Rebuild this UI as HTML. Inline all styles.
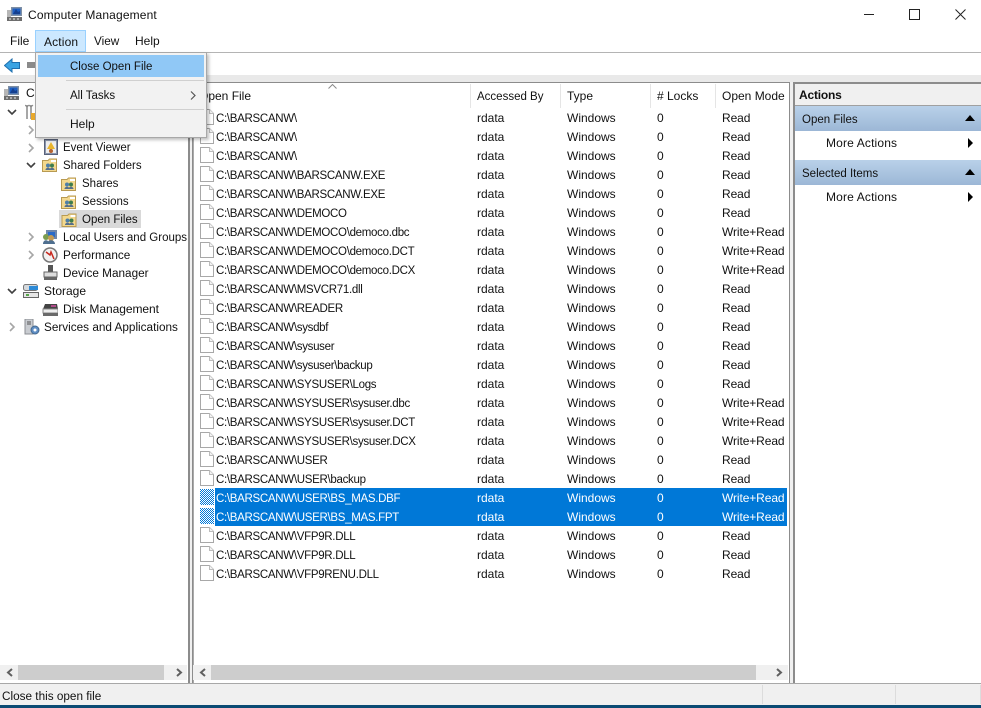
<!DOCTYPE html>
<html><head><meta charset="utf-8"><title>Computer Management</title>
<style>
html,body{margin:0;padding:0;background:#fff}
#w{position:relative;width:981px;height:708px;overflow:hidden;background:#fff;font:12px "Liberation Sans",sans-serif;color:#111}
.a{position:absolute;white-space:nowrap}
.t{position:absolute;white-space:nowrap;line-height:18px;height:18px}
.n{font-size:11.5px;margin-top:1px}
.m{font-size:11.75px;margin-top:1px}
.r{position:relative;height:19px;line-height:19px;white-space:nowrap}
.r span{position:absolute;top:1px}
.r span:nth-of-type(1){left:24px;top:2px;font-size:11.5px;letter-spacing:-.3px}
.r span:nth-of-type(2){left:285px}
.r span:nth-of-type(3){left:375px}
.r span:nth-of-type(4){left:465px}
.r span:nth-of-type(5){left:530px;letter-spacing:-.1px}
.r svg{position:absolute;left:8px;top:1px}
.s{color:#fff}
.s:before{content:"";position:absolute;left:23px;top:0;width:572px;height:19px;background:#0078d7}
.s span{z-index:1}
.h{position:absolute;top:0;height:25px;line-height:27px}
.sep{position:absolute;top:84px;height:24px;width:1px;background:#e5e5e5}
.bar{position:absolute;left:795px;width:186px;height:25px;background:linear-gradient(#b9d1e9,#9cb7d6);line-height:25px;font-size:11.5px}
.bar span{top:2px}
svg{display:block}
</style></head><body><div id="w">
<svg width="0" height="0" style="position:absolute"><defs>
<symbol id="doc" viewBox="0 0 14 16"><path d="M.5.5H9.5L13.5 4.500V15.500H.5Z" fill="#fff" stroke="#a8a8a8"/><path d="M9.500.5V4.500H13.500" fill="#f3f3f3" stroke="#bcbcbc"/></symbol>
<symbol id="sel" viewBox="0 0 14 16"><pattern id="ck" width="2" height="2" patternUnits="userSpaceOnUse"><rect width="2" height="2" fill="#fff"/><rect width="1" height="1" fill="#0078d7"/><rect x="1" y="1" width="1" height="1" fill="#0078d7"/></pattern><rect width="14" height="16" fill="url(#ck)"/></symbol>
<symbol id="pc" viewBox="0 0 16 16"><rect x="4" y="1" width="11" height="9" fill="#7e8fa5"/><rect x="5.500" y="2.500" width="8" height="6" fill="#1d5fc4"/><path d="M6 8L9 3l2 3 2-1v3Z" fill="#153f8f"/><rect x="0" y="4" width="4" height="8" fill="#b6b6b6"/><rect x="0" y="11" width="15" height="4" fill="#6d6d6d"/><path d="M2 13h2M6 13h2M10 13h2" stroke="#eee"/></symbol>
<symbol id="fold" viewBox="0 0 15 15"><path d="M.5 3.500H6L7.500 2H14.500V14.500H.5Z" fill="#f3d88e" stroke="#b89a52"/><rect x="9" y="3" width="5" height="2" fill="#fff"/><circle cx="6" cy="8.500" r="2" fill="#4f7fa8"/><circle cx="10" cy="8.500" r="2" fill="#3e7d4d"/><path d="M3.500 13c0-3 5-3 5 0ZM7.500 13c0-3 5-3 5 0Z" fill="#556f8c"/></symbol>
<symbol id="ch" viewBox="0 0 10 10"><path d="M1 3l4 4 4-4" fill="none" stroke="#404040" stroke-width="1.600"/></symbol>
<symbol id="rt" viewBox="0 0 10 10"><path d="M3 1l4 4-4 4" fill="none" stroke="#a6a6a6" stroke-width="1.600"/></symbol>
</defs></svg>

<!-- title bar -->
<svg class="a" style="left:7px;top:6px" width="16" height="16"><use href="#pc"/></svg>
<div class="a" style="left:28px;top:6px;line-height:18px;letter-spacing:.15px">Computer Management</div>
<div class="a" style="left:864px;top:14px;width:10px;height:1px;background:#222"></div>
<div class="a" style="left:909px;top:9px;width:9px;height:9px;border:1px solid #222"></div>
<svg class="a" style="left:955px;top:9px" width="11" height="11"><path d="M.5.5l10 10M10.500.5l-10 10" stroke="#222"/></svg>

<!-- menu bar -->
<div class="t" style="left:10px;top:32px">File</div>
<div class="a" style="left:35px;top:30px;width:49px;height:20px;background:#cce8ff;border:1px solid #99d1ff"></div>
<div class="t" style="left:44px;top:33px;letter-spacing:.15px">Action</div>
<div class="t m" style="left:94px;top:32px">View</div>
<div class="t" style="left:135px;top:32px">Help</div>
<div class="a" style="left:0;top:52px;width:981px;height:1px;background:#b4b4b4"></div>

<!-- toolbar -->
<svg class="a" style="left:4px;top:58px" width="16" height="15"><path d="M.500 7.500L8 1v3.500h7.500v6H8V14Z" fill="#3aa3e3" stroke="#1f6fae"/></svg>
<div class="a" style="left:27px;top:62px;width:8px;height:6px;background:#8a8a8a"></div>
<div class="a" style="left:0;top:75px;width:981px;height:7px;background:#e9e9e9"></div>

<!-- panes frame -->
<div class="a" style="left:0;top:82px;width:981px;height:602px;background:#f0f0f0"></div>
<div class="a" style="left:-2px;top:82px;width:189px;height:600px;background:#fff;border:1px solid #8c8c8c;border-width:1px 2px 2px 1px"></div>
<div class="a" style="left:192px;top:82px;width:596px;height:600px;background:#fff;border:1px solid #8c8c8c;border-width:1px 1px 2px 1px;box-shadow:inset 1px 0 0 #aaa"></div>
<div class="a" style="left:793px;top:82px;width:188px;height:600px;background:#fff;border-left:2px solid #8c8c8c;border-top:2px solid #8c8c8c;border-bottom:2px solid #dcdcdc"></div>

<!-- tree -->
<svg class="a" style="left:4px;top:85px" width="16" height="16"><use href="#pc"/></svg>
<div class="t" style="left:26px;top:84px">Com</div>
<svg class="a" style="left:7px;top:107px" width="10" height="10"><use href="#ch"/></svg>
<svg class="a" style="left:25px;top:103px" width="11" height="17"><path d="M2 2v14M6 2v14" stroke="#8a8a8a" stroke-width="1.500"/><path d="M0 2l2 2 2-2M4 2l2 2 2-2" fill="none" stroke="#8a8a8a"/><rect x="6" y="10" width="5" height="7" fill="#e8a92c"/></svg>
<svg class="a" style="left:26px;top:125px" width="10" height="10"><use href="#rt"/></svg>
<svg class="a" style="left:26px;top:143px" width="10" height="10"><use href="#rt"/></svg>
<svg class="a" style="left:44px;top:139px" width="14" height="16"><rect x=".5" y=".5" width="13" height="15" fill="#8b96ad" stroke="#59627a"/><rect x="2" y="2" width="10" height="12" fill="#eee"/><path d="M7 3l4 7H3Z" fill="#e9b52e"/><circle cx="7" cy="12" r="2" fill="#b5622e"/></svg>
<div class="t n" style="left:63px;top:138px">Event Viewer</div>
<svg class="a" style="left:26px;top:160px" width="10" height="10"><use href="#ch"/></svg>
<svg class="a" style="left:42px;top:157px" width="15" height="15"><use href="#fold"/></svg>
<div class="t n" style="left:63px;top:156px">Shared Folders</div>
<svg class="a" style="left:61px;top:176px" width="15" height="15"><use href="#fold"/></svg>
<div class="t n" style="left:82px;top:174px">Shares</div>
<svg class="a" style="left:61px;top:194px" width="15" height="15"><use href="#fold"/></svg>
<div class="t n" style="left:82px;top:192px">Sessions</div>
<div class="a" style="left:59px;top:210px;width:82px;height:18px;background:#d9d9d9"></div>
<svg class="a" style="left:61px;top:212px" width="16" height="15"><use href="#fold"/></svg>
<div class="t n" style="left:82px;top:210px">Open Files</div>
<svg class="a" style="left:26px;top:232px" width="10" height="10"><use href="#rt"/></svg>
<svg class="a" style="left:42px;top:229px" width="16" height="16"><rect x="4" y="1" width="11" height="9" fill="#6f87ab"/><rect x="6" y="3" width="7" height="5" fill="#2a6bc9"/><circle cx="4" cy="8" r="3" fill="#7b9c4e"/><circle cx="9" cy="9" r="3" fill="#c49b55"/><path d="M1 15c0-5 6-5 6 0ZM5 15c0-5 8-5 8 0Z" fill="#4f6f8f"/></svg>
<div class="t n" style="left:63px;top:228px">Local Users and Groups</div>
<svg class="a" style="left:26px;top:250px" width="10" height="10"><use href="#rt"/></svg>
<svg class="a" style="left:42px;top:247px" width="16" height="16"><circle cx="8" cy="8" r="7" fill="#f1f1f1" stroke="#777" stroke-width="1.500"/><path d="M4 5l4 3 1-3 3 7" fill="none" stroke="#c8281e" stroke-width="1.500"/></svg>
<div class="t m" style="left:63px;top:246px">Performance</div>
<svg class="a" style="left:43px;top:265px" width="15" height="16"><rect x="5" y="0" width="5" height="7" fill="#555"/><rect x="1" y="7" width="13" height="5" fill="#ddd" stroke="#666"/><rect x="1" y="12" width="13" height="3" fill="#666"/></svg>
<div class="t m" style="left:63px;top:264px">Device Manager</div>
<svg class="a" style="left:7px;top:286px" width="10" height="10"><use href="#ch"/></svg>
<svg class="a" style="left:23px;top:283px" width="16" height="16"><rect x=".5" y="1.500" width="14" height="6" rx="2" fill="#d5d9dd" stroke="#777"/><rect x="6" y="3" width="9" height="4" fill="#2d8ad6"/><rect x=".5" y="9.500" width="15" height="5" fill="#e6e6e6" stroke="#666"/><rect x="3" y="11" width="3" height="2" fill="#58a64a"/></svg>
<div class="t" style="left:44px;top:282px">Storage</div>
<svg class="a" style="left:42px;top:303px" width="16" height="14"><path d="M3 1h12l1 5H1Z" fill="#444"/><rect x="9" y="2" width="5" height="2" fill="#b04a8a"/><rect x="1" y="6" width="15" height="4" fill="#eee" stroke="#888"/><rect x="1" y="10" width="15" height="3" fill="#6a6a6a"/></svg>
<div class="t" style="left:63px;top:300px;letter-spacing:-.05px">Disk Management</div>
<svg class="a" style="left:7px;top:322px" width="10" height="10"><use href="#rt"/></svg>
<svg class="a" style="left:24px;top:319px" width="16" height="16"><rect x="1" y="0" width="8" height="15" fill="#c9ccd1" stroke="#8b8e93"/><path d="M3 3h4M3 5h4" stroke="#555"/><circle cx="11" cy="11" r="4" fill="#5f8ec4" stroke="#44688f"/><circle cx="11" cy="11" r="1.500" fill="#fff"/></svg>
<div class="t m" style="left:44px;top:318px">Services and Applications</div>

<!-- left scrollbar -->
<div class="a" style="left:0;top:665px;width:187px;height:15px;background:#f0f0f0"></div>
<div class="a" style="left:18px;top:665px;width:146px;height:15px;background:#cdcdcd"></div>
<svg class="a" style="left:6px;top:668px" width="8" height="9"><path d="M6 1L2 4.500 6 8" fill="none" stroke="#606060" stroke-width="2"/></svg>
<svg class="a" style="left:175px;top:668px" width="8" height="9"><path d="M2 1l4 3.500L2 8" fill="none" stroke="#606060" stroke-width="2"/></svg>

<!-- list -->
<div class="a" style="left:193px;top:83px;width:595px;height:25px">
<div class="h" style="left:6px">Open File</div>
<div class="h n" style="left:284px">Accessed By</div>
<div class="h" style="left:374px">Type</div>
<div class="h" style="left:464px"># Locks</div>
<div class="h" style="left:529px">Open Mode</div>
</div>
<svg class="a" style="left:328px;top:84px" width="9" height="5"><path d="M.5 4.500l4-4 4 4" fill="none" stroke="#8a8a8a"/></svg>
<div class="sep" style="left:470px"></div><div class="sep" style="left:560px"></div><div class="sep" style="left:650px"></div><div class="sep" style="left:715px"></div>

<div class="a" style="left:192px;top:108px;width:596px">
<div class="r"><svg width="14" height="16"><use href="#doc"/></svg><span>C:\BARSCANW\</span><span>rdata</span><span>Windows</span><span>0</span><span>Read</span></div>
<div class="r"><svg width="14" height="16"><use href="#doc"/></svg><span>C:\BARSCANW\</span><span>rdata</span><span>Windows</span><span>0</span><span>Read</span></div>
<div class="r"><svg width="14" height="16"><use href="#doc"/></svg><span>C:\BARSCANW\</span><span>rdata</span><span>Windows</span><span>0</span><span>Read</span></div>
<div class="r"><svg width="14" height="16"><use href="#doc"/></svg><span>C:\BARSCANW\BARSCANW.EXE</span><span>rdata</span><span>Windows</span><span>0</span><span>Read</span></div>
<div class="r"><svg width="14" height="16"><use href="#doc"/></svg><span>C:\BARSCANW\BARSCANW.EXE</span><span>rdata</span><span>Windows</span><span>0</span><span>Read</span></div>
<div class="r"><svg width="14" height="16"><use href="#doc"/></svg><span>C:\BARSCANW\DEMOCO</span><span>rdata</span><span>Windows</span><span>0</span><span>Read</span></div>
<div class="r"><svg width="14" height="16"><use href="#doc"/></svg><span>C:\BARSCANW\DEMOCO\democo.dbc</span><span>rdata</span><span>Windows</span><span>0</span><span>Write+Read</span></div>
<div class="r"><svg width="14" height="16"><use href="#doc"/></svg><span>C:\BARSCANW\DEMOCO\democo.DCT</span><span>rdata</span><span>Windows</span><span>0</span><span>Write+Read</span></div>
<div class="r"><svg width="14" height="16"><use href="#doc"/></svg><span>C:\BARSCANW\DEMOCO\democo.DCX</span><span>rdata</span><span>Windows</span><span>0</span><span>Write+Read</span></div>
<div class="r"><svg width="14" height="16"><use href="#doc"/></svg><span>C:\BARSCANW\MSVCR71.dll</span><span>rdata</span><span>Windows</span><span>0</span><span>Read</span></div>
<div class="r"><svg width="14" height="16"><use href="#doc"/></svg><span>C:\BARSCANW\READER</span><span>rdata</span><span>Windows</span><span>0</span><span>Read</span></div>
<div class="r"><svg width="14" height="16"><use href="#doc"/></svg><span>C:\BARSCANW\sysdbf</span><span>rdata</span><span>Windows</span><span>0</span><span>Read</span></div>
<div class="r"><svg width="14" height="16"><use href="#doc"/></svg><span>C:\BARSCANW\sysuser</span><span>rdata</span><span>Windows</span><span>0</span><span>Read</span></div>
<div class="r"><svg width="14" height="16"><use href="#doc"/></svg><span>C:\BARSCANW\sysuser\backup</span><span>rdata</span><span>Windows</span><span>0</span><span>Read</span></div>
<div class="r"><svg width="14" height="16"><use href="#doc"/></svg><span>C:\BARSCANW\SYSUSER\Logs</span><span>rdata</span><span>Windows</span><span>0</span><span>Read</span></div>
<div class="r"><svg width="14" height="16"><use href="#doc"/></svg><span>C:\BARSCANW\SYSUSER\sysuser.dbc</span><span>rdata</span><span>Windows</span><span>0</span><span>Write+Read</span></div>
<div class="r"><svg width="14" height="16"><use href="#doc"/></svg><span>C:\BARSCANW\SYSUSER\sysuser.DCT</span><span>rdata</span><span>Windows</span><span>0</span><span>Write+Read</span></div>
<div class="r"><svg width="14" height="16"><use href="#doc"/></svg><span>C:\BARSCANW\SYSUSER\sysuser.DCX</span><span>rdata</span><span>Windows</span><span>0</span><span>Write+Read</span></div>
<div class="r"><svg width="14" height="16"><use href="#doc"/></svg><span>C:\BARSCANW\USER</span><span>rdata</span><span>Windows</span><span>0</span><span>Read</span></div>
<div class="r"><svg width="14" height="16"><use href="#doc"/></svg><span>C:\BARSCANW\USER\backup</span><span>rdata</span><span>Windows</span><span>0</span><span>Read</span></div>
<div class="r s"><svg width="14" height="16"><use href="#sel"/></svg><span>C:\BARSCANW\USER\BS_MAS.DBF</span><span>rdata</span><span>Windows</span><span>0</span><span>Write+Read</span></div>
<div class="r s"><svg width="14" height="16"><use href="#sel"/></svg><span>C:\BARSCANW\USER\BS_MAS.FPT</span><span>rdata</span><span>Windows</span><span>0</span><span>Write+Read</span></div>
<div class="r"><svg width="14" height="16"><use href="#doc"/></svg><span>C:\BARSCANW\VFP9R.DLL</span><span>rdata</span><span>Windows</span><span>0</span><span>Read</span></div>
<div class="r"><svg width="14" height="16"><use href="#doc"/></svg><span>C:\BARSCANW\VFP9R.DLL</span><span>rdata</span><span>Windows</span><span>0</span><span>Read</span></div>
<div class="r"><svg width="14" height="16"><use href="#doc"/></svg><span>C:\BARSCANW\VFP9RENU.DLL</span><span>rdata</span><span>Windows</span><span>0</span><span>Read</span></div>
</div>

<!-- list scrollbar -->
<div class="a" style="left:193px;top:665px;width:595px;height:15px;background:#f0f0f0"></div>
<div class="a" style="left:211px;top:665px;width:545px;height:15px;background:#cdcdcd"></div>
<svg class="a" style="left:199px;top:668px" width="8" height="9"><path d="M6 1L2 4.500 6 8" fill="none" stroke="#606060" stroke-width="2"/></svg>
<svg class="a" style="left:775px;top:668px" width="8" height="9"><path d="M2 1l4 3.500L2 8" fill="none" stroke="#606060" stroke-width="2"/></svg>

<!-- actions -->
<div class="a" style="left:795px;top:84px;width:186px;height:21px;background:#f0f0f0;border-bottom:1px solid #a0a0a0"></div>
<div class="t" style="left:799px;top:86px;font-weight:bold;letter-spacing:-.2px">Actions</div>
<div class="bar" style="top:106px"><span class="a" style="left:7px">Open Files</span></div>
<svg class="a" style="left:965px;top:115px" width="10" height="6"><path d="M5 0l5 6H0Z" fill="#000"/></svg>
<div class="t" style="left:826px;top:134px;letter-spacing:.15px">More Actions</div>
<svg class="a" style="left:968px;top:138px" width="6" height="10"><path d="M0 0l5 5-5 5Z" fill="#000"/></svg>
<div class="bar" style="top:160px"><span class="a" style="left:7px">Selected Items</span></div>
<svg class="a" style="left:965px;top:169px" width="10" height="6"><path d="M5 0l5 6H0Z" fill="#000"/></svg>
<div class="t" style="left:826px;top:188px;letter-spacing:.15px">More Actions</div>
<svg class="a" style="left:968px;top:192px" width="6" height="10"><path d="M0 0l5 5-5 5Z" fill="#000"/></svg>

<!-- dropdown menu -->
<div class="a" style="left:35px;top:52px;width:170px;height:84px;background:#f2f2f2;border:1px solid #a8a8a8;box-shadow:2px 2px 3px rgba(0,0,0,.25)"></div>
<div class="a" style="left:38px;top:55px;width:166px;height:22px;background:#90c8f6"></div>
<div class="t n" style="left:70px;top:57px">Close Open File</div>
<div class="a" style="left:66px;top:80px;width:138px;height:1px;background:#d0d0d0"></div>
<div class="t n" style="left:70px;top:86px">All Tasks</div>
<svg class="a" style="left:190px;top:91px" width="6" height="9"><path d="M1 .5l4 4-4 4" fill="none" stroke="#555" stroke-width="1.200"/></svg>
<div class="a" style="left:66px;top:109px;width:138px;height:1px;background:#d0d0d0"></div>
<div class="t" style="left:70px;top:115px">Help</div>

<!-- status bar -->
<div class="a" style="left:0;top:683px;width:981px;height:22px;background:#f0f0f0;border-top:1px solid #a8a8a8;box-sizing:border-box"></div>
<div class="t m" style="left:2px;top:687px">Close this open file</div>
<div class="a" style="left:762px;top:685px;width:1px;height:19px;background:#dcdcdc"></div>
<div class="a" style="left:895px;top:685px;width:1px;height:19px;background:#dcdcdc"></div>
<div class="a" style="left:980px;top:685px;width:1px;height:19px;background:#dcdcdc"></div>
<div class="a" style="left:0;top:705px;width:981px;height:3px;background:#0b4a73"></div>
</div></body></html>
